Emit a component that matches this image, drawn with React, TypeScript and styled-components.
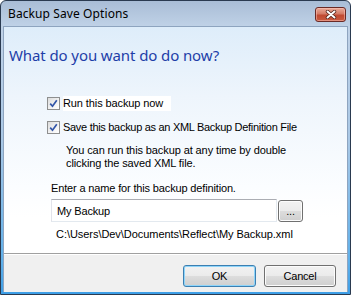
import React from "react";
import styled, { createGlobalStyle } from "styled-components";

const Global = createGlobalStyle`
  html, body { margin: 0; padding: 0; background: #ffffff; }
  body { width: 351px; height: 295px; overflow: hidden; }
`;

const Window = styled.div`
  box-sizing: border-box;
  width: 351px;
  height: 295px;
  display: flex;
  flex-direction: column;
  border: 1px solid #2a3a50;
  border-radius: 6px 6px 0 0;
  background: linear-gradient(to bottom, #a9bdd6 0px, #c0d2e7 26px, #a9c8e6 140px, #5fb0ea 260px, #3d9ee6 100%);
  padding: 0 2px 2px 2px;
`;

const TitleBar = styled.div`
  height: 25px;
  display: flex;
  align-items: center;
  justify-content: space-between;
  padding: 0 2px 0 5px;
  font-family: "Noto Sans", sans-serif;
  font-size: 12px;
  letter-spacing: 0.1px;
  color: #000;
`;

const CloseButton = styled.div`
  box-sizing: border-box;
  width: 31px;
  height: 15px;
  margin-top: 1px;
  border: 1px solid #6a2a26;
  border-radius: 3px;
  background: linear-gradient(to bottom, #e9ab99 0%, #d47a66 45%, #c04a32 55%, #c85a40 100%);
  box-shadow: inset 0 0 0 1px rgba(255, 200, 190, 0.5);
  display: flex;
  align-items: center;
  justify-content: center;
`;

const Client = styled.div`
  flex: 1;
  display: flex;
  flex-direction: column;
  border: 1px solid #8ea4bf;
  border-bottom: none;
  background: #f0f0f0;
`;

const Content = styled.div`
  height: 226px;
  background: linear-gradient(to bottom, #deedfa 0px, #eef5fc 70px, #fbfdff 160px, #ffffff 190px);
  border-bottom: 1px solid #a0a0a0;
  display: flex;
  flex-direction: column;
  font-family: "Liberation Sans", Arial, sans-serif;
  font-size: 11px;
  letter-spacing: -0.15px;
  color: #000;
`;

const Heading = styled.div`
  margin: 17px 0 0 5px;
  font-family: "Noto Sans", sans-serif;
  font-size: 15px;
  letter-spacing: -0.1px;
  line-height: 22px;
  color: #1e3ea8;
`;

const Options = styled.div`
  margin: 30px 0 0 43px;
  display: flex;
  flex-direction: column;
`;

const CheckRow = styled.label<{ $white?: boolean; $gap: number; $tight?: boolean }>`
  display: flex;
  align-items: center;
  gap: 3px;
  height: 15px;
  margin-bottom: ${(p) => p.$gap}px;
  letter-spacing: ${(p) => (p.$tight ? "-0.3px" : "-0.1px")};
  span.lbl {
    background: ${(p) => (p.$white ? "#ffffff" : "transparent")};
    padding-right: ${(p) => (p.$white ? "8px" : "0")};
    line-height: 15px;
  }
`;

const Box = styled.span`
  box-sizing: border-box;
  width: 13px;
  height: 13px;
  border: 1px solid #8e8f8f;
  background: linear-gradient(135deg, #dcdcdc 0%, #f4f4f4 60%, #ffffff 100%);
  display: flex;
  align-items: center;
  justify-content: center;
  flex: none;
`;

const Note = styled.div`
  margin: 9px 0 0 19px;
  line-height: 13px;
  letter-spacing: -0.1px;
`;

const NameSection = styled.div`
  margin: 12px 0 0 47px;
  display: flex;
  flex-direction: column;
`;

const NameRow = styled.div`
  display: flex;
  align-items: center;
  gap: 1px;
  margin-top: 5px;
`;

const TextBox = styled.div`
  box-sizing: border-box;
  width: 226px;
  height: 23px;
  border: 1px solid #e3e9ef;
  border-top-color: #abadb3;
  border-left-color: #e2e3ea;
  background: #fff;
  padding-left: 5px;
  display: flex;
  align-items: center;
`;

const Path = styled.div`
  margin: 6px 0 0 5px;
  letter-spacing: -0.05px;
`;

const Button = styled.button<{ $w: number; $focus?: boolean }>`
  box-sizing: border-box;
  width: ${(p) => p.$w}px;
  height: 22px;
  padding: 0;
  border: 1px solid ${(p) => (p.$focus ? "#3c7fb1" : "#707070")};
  border-radius: 3px;
  background: linear-gradient(to bottom, #f2f2f2 0%, #ebebeb 49%, #dddddd 50%, #cfcfcf 100%);
  box-shadow: inset 0 0 0 1px ${(p) => (p.$focus ? "#8fd5fa" : "#fcfcfc")};
  font-family: "Liberation Sans", Arial, sans-serif;
  font-size: 11px;
  letter-spacing: -0.2px;
  color: #000;
`;

const Footer = styled.div`
  flex: 1;
  background: #f0f0f0;
  border-top: 1px solid #ffffff;
  display: flex;
  justify-content: flex-end;
  align-items: flex-start;
  gap: 8px;
  padding: 10px 11px 0 0;
`;

const Check = () => (
  <svg width="9" height="9" viewBox="0 0 9 9">
    <path d="M1.2 4.6 L3.5 7.2 L7.8 1.2" fill="none" stroke="#3356a8" strokeWidth="1.7" />
  </svg>
);

export default function App() {
  return (
    <>
      <Global />
      <Window>
        <TitleBar>
          <span>Backup Save Options</span>
          <CloseButton>
            <svg width="12" height="9" viewBox="0 0 12 9">
              <path d="M2.5 1.5 L9.5 7.5 M9.5 1.5 L2.5 7.5" stroke="#4a1c14" strokeWidth="3.4" strokeLinecap="round" />
              <path d="M2.5 1.5 L9.5 7.5 M9.5 1.5 L2.5 7.5" stroke="#ffffff" strokeWidth="2" strokeLinecap="round" />
            </svg>
          </CloseButton>
        </TitleBar>
        <Client>
          <Content>
            <Heading>What do you want do do now?</Heading>
            <Options>
              <CheckRow $white $gap={9}>
                <Box><Check /></Box>
                <span className="lbl">Run this backup now</span>
              </CheckRow>
              <CheckRow $gap={0} $tight>
                <Box><Check /></Box>
                <span className="lbl">Save this backup as an XML Backup Definition File</span>
              </CheckRow>
              <Note>
                You can run this backup at any time by double
                <br />
                clicking the saved XML file.
              </Note>
            </Options>
            <NameSection>
              <div>Enter a name for this backup definition.</div>
              <NameRow>
                <TextBox>My Backup</TextBox>
                <Button $w={25}>...</Button>
              </NameRow>
              <Path>C:\Users\Dev\Documents\Reflect\My Backup.xml</Path>
            </NameSection>
          </Content>
          <Footer>
            <Button $w={73} $focus>OK</Button>
            <Button $w={72}>Cancel</Button>
          </Footer>
        </Client>
      </Window>
    </>
  );
}
